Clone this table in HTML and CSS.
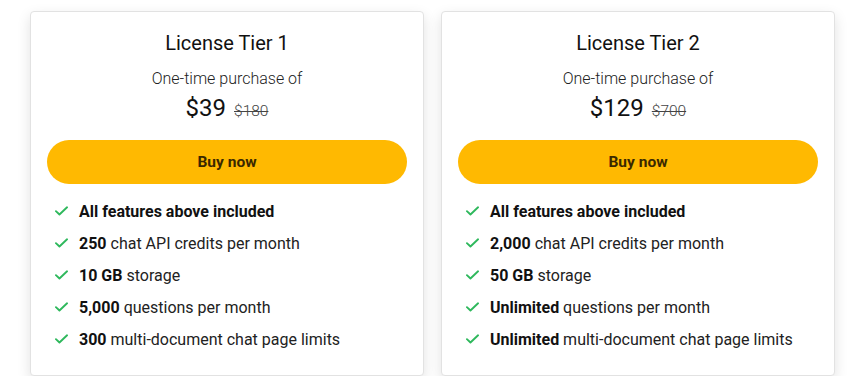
FILE: index.html
```html
<!DOCTYPE html>
<html>
<head>
<meta charset="utf-8">
<link rel="stylesheet" href="styles.css">
</head>
<body>
<div class="wrap">
  <div class="card">
    <h2 class="title">License Tier 1</h2>
    <p class="sub">One-time purchase of</p>
    <p class="price"><span class="now">$39</span><s class="old">$180</s></p>
    <button class="buy">Buy now</button>
    <ul class="feats">
      <li><svg class="ck" viewBox="0 0 14 10"><path d="M1 5.2l3.8 3.6L13 1" /></svg><span><b>All features above included</b></span></li>
      <li><svg class="ck" viewBox="0 0 14 10"><path d="M1 5.2l3.8 3.6L13 1" /></svg><span><b>250</b> chat API credits per month</span></li>
      <li><svg class="ck" viewBox="0 0 14 10"><path d="M1 5.2l3.8 3.6L13 1" /></svg><span><b>10 GB</b> storage</span></li>
      <li><svg class="ck" viewBox="0 0 14 10"><path d="M1 5.2l3.8 3.6L13 1" /></svg><span><b>5,000</b> questions per month</span></li>
      <li><svg class="ck" viewBox="0 0 14 10"><path d="M1 5.2l3.8 3.6L13 1" /></svg><span><b>300</b> multi-document chat page limits</span></li>
    </ul>
  </div>
  <div class="card">
    <h2 class="title">License Tier 2</h2>
    <p class="sub">One-time purchase of</p>
    <p class="price"><span class="now">$129</span><s class="old">$700</s></p>
    <button class="buy">Buy now</button>
    <ul class="feats">
      <li><svg class="ck" viewBox="0 0 14 10"><path d="M1 5.2l3.8 3.6L13 1" /></svg><span><b>All features above included</b></span></li>
      <li><svg class="ck" viewBox="0 0 14 10"><path d="M1 5.2l3.8 3.6L13 1" /></svg><span><b>2,000</b> chat API credits per month</span></li>
      <li><svg class="ck" viewBox="0 0 14 10"><path d="M1 5.2l3.8 3.6L13 1" /></svg><span><b>50 GB</b> storage</span></li>
      <li><svg class="ck" viewBox="0 0 14 10"><path d="M1 5.2l3.8 3.6L13 1" /></svg><span><b>Unlimited</b> questions per month</span></li>
      <li><svg class="ck" viewBox="0 0 14 10"><path d="M1 5.2l3.8 3.6L13 1" /></svg><span><b>Unlimited</b> multi-document chat page limits</span></li>
    </ul>
  </div>
</div>
</body>
</html>
```

FILE: styles.css
```css
* { box-sizing: border-box; }
body {
  margin: 0;
  background: #fff;
  font-family: Roboto, "Noto Sans", Arial, sans-serif;
  color: #1f2328;
}
.wrap {
  display: flex;
  gap: 17px;
  padding: 11px 0 0 30px;
}
.card {
  width: 394px;
  height: 365px;
  border: 1px solid #e2e2e2;
  border-radius: 4px;
  background: #fff;
  box-shadow: 0 5px 14px rgba(0,0,0,0.12);
  padding: 19px 16px 0 16px;
  display: flex;
  flex-direction: column;
  align-items: center;
}
.title {
  margin: 0;
  font-size: 20px;
  font-weight: 400;
  line-height: 24px;
  color: #111;
}
.sub {
  margin: 14px 0 0;
  font-size: 16px;
  font-weight: 300;
  line-height: 20px;
  color: #222;
}
.price {
  margin: 4px 0 0;
  display: flex;
  align-items: baseline;
  gap: 8px;
  line-height: 30px;
}
.now { font-size: 24px; color: #111; }
.old { font-size: 15.5px; font-weight: 300; color: #444; }
.buy {
  margin-top: 14px;
  width: 100%;
  height: 44px;
  flex: none;
  border: none;
  border-radius: 22px;
  background: #ffb901;
  font-family: inherit;
  font-size: 15.5px;
  font-weight: 700;
  color: #3a2800;
}
.feats {
  list-style: none;
  margin: 11px 0 0;
  padding: 0 0 0 8px;
  align-self: stretch;
}
.feats li {
  display: flex;
  align-items: center;
  height: 32px;
  font-size: 16px;
  color: #222;
}
.feats b { font-weight: 700; color: #111; }
.ck {
  width: 13px;
  height: 10px;
  margin-right: 11px;
  fill: none;
  stroke: #2eb85c;
  stroke-width: 2;
  stroke-linecap: round;
  stroke-linejoin: round;
}
```
